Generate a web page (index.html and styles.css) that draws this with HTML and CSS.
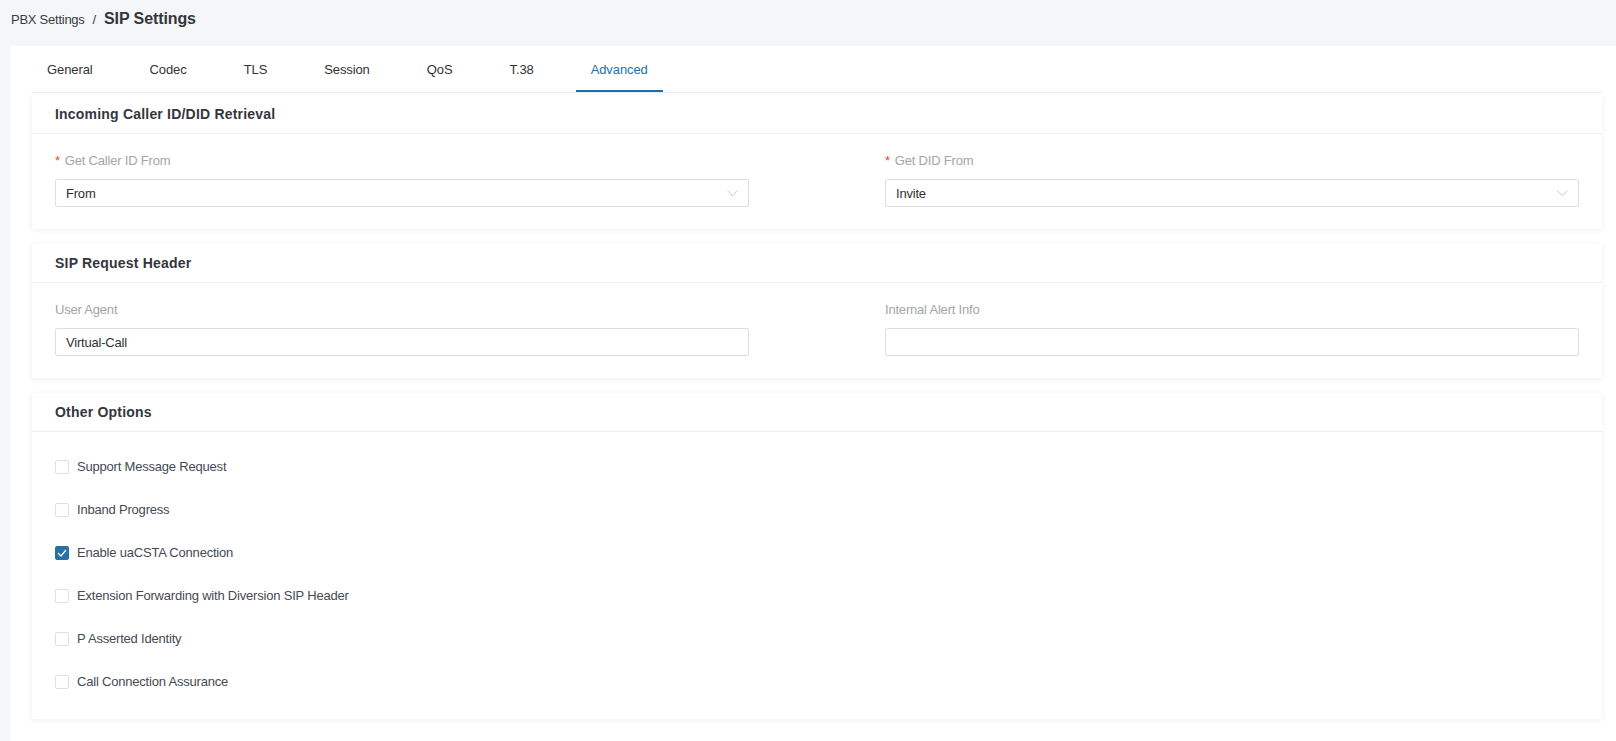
FILE: index.html
```html
<!DOCTYPE html>
<html lang="en">
<head>
<meta charset="utf-8">
<title>SIP Settings</title>
<link rel="stylesheet" href="styles.css">
</head>
<body>
<div class="breadcrumb">
  <span class="crumb">PBX Settings</span>
  <span class="sep">/</span>
  <span class="current">SIP Settings</span>
</div>
<div class="panel">
  <div class="tabs">
    <div class="tab">General</div>
    <div class="tab">Codec</div>
    <div class="tab">TLS</div>
    <div class="tab">Session</div>
    <div class="tab">QoS</div>
    <div class="tab">T.38</div>
    <div class="tab active">Advanced</div>
  </div>

  <div class="card first">
    <div class="card-head">Incoming Caller ID/DID Retrieval</div>
    <div class="card-body grid">
      <div class="field">
        <div class="label"><span class="req">*</span>Get Caller ID From</div>
        <div class="select">
          <span>From</span>
          <svg class="chev" width="11" height="7" viewBox="0 0 11 7"><polyline points="0.5,0.5 5.5,6 10.5,0.5" fill="none" stroke="#c9cbcf" stroke-width="1"/></svg>
        </div>
      </div>
      <div class="field">
        <div class="label"><span class="req">*</span>Get DID From</div>
        <div class="select">
          <span>Invite</span>
          <svg class="chev" width="11" height="7" viewBox="0 0 11 7"><polyline points="0.5,0.5 5.5,6 10.5,0.5" fill="none" stroke="#c9cbcf" stroke-width="1"/></svg>
        </div>
      </div>
    </div>
  </div>

  <div class="card">
    <div class="card-head">SIP Request Header</div>
    <div class="card-body grid">
      <div class="field">
        <div class="label">User Agent</div>
        <div class="input">Virtual-Call</div>
      </div>
      <div class="field">
        <div class="label">Internal Alert Info</div>
        <div class="input"></div>
      </div>
    </div>
  </div>

  <div class="card">
    <div class="card-head">Other Options</div>
    <div class="card-body list">
      <div class="check-row"><span class="box"></span><span>Support Message Request</span></div>
      <div class="check-row"><span class="box"></span><span>Inband Progress</span></div>
      <div class="check-row"><span class="box checked"><svg width="10" height="8" viewBox="0 0 10 8"><polyline points="1,4 4,7 9,1" fill="none" stroke="#fff" stroke-width="1.3"/></svg></span><span>Enable uaCSTA Connection</span></div>
      <div class="check-row"><span class="box"></span><span>Extension Forwarding with Diversion SIP Header</span></div>
      <div class="check-row"><span class="box"></span><span>P Asserted Identity</span></div>
      <div class="check-row"><span class="box"></span><span>Call Connection Assurance</span></div>
    </div>
  </div>
</div>
</body>
</html>
```

FILE: styles.css
```css
html, body {
  margin: 0;
  padding: 0;
}
body {
  background: #f5f6f8;
  font-family: "Liberation Sans", Arial, sans-serif;
  font-size: 13px;
  letter-spacing: -0.2px;
  color: #333;
}
.breadcrumb {
  height: 46px;
  box-sizing: border-box;
  padding: 9px 0 0 11px;
  display: flex;
  align-items: baseline;
  line-height: 20px;
}
.crumb {
  color: #3a3d44;
  font-size: 13px;
  letter-spacing: -0.25px;
}
.sep {
  color: #3a3d44;
  margin: 0 8px 0 8px;
  font-size: 13px;
}
.current {
  font-size: 16px;
  font-weight: bold;
  letter-spacing: -0.1px;
  color: #33363d;
}
.panel {
  margin-left: 10px;
  background: #fff;
  padding: 0 14px 22px 22px;
  min-height: calc(100vh - 46px);
  box-sizing: border-box;
}
.tabs {
  display: flex;
  border-bottom: 1px solid #ebedf0;
}
.tab {
  padding: 3px 15px 0;
  margin-right: 27px;
  line-height: 41px;
  letter-spacing: -0.1px;
  border-bottom: 2px solid transparent;
  color: #333;
}
.tab.active {
  color: #1f6fa8;
  border-bottom-color: #1f6fa8;
}
.card {
  background: #fff;
  box-shadow: 0 1px 6px rgba(0, 0, 0, 0.07);
  margin-top: 15px;
}
.card.first {
  margin-top: 2px;
}
.card-head {
  height: 38px;
  line-height: 39px;
  padding: 0 23px;
  font-size: 14px;
  font-weight: bold;
  letter-spacing: 0.2px;
  color: #33363d;
  border-bottom: 1px solid #eceef1;
}
.card-body.grid {
  display: grid;
  grid-template-columns: 1fr 1fr;
  column-gap: 136px;
  padding: 18px 23px 22px;
}
.label {
  line-height: 18px;
  color: #a2a5aa;
  margin-bottom: 9px;
}
.req {
  color: #ef3f2f;
  margin-right: 5px;
}
.select, .input {
  height: 28px;
  box-sizing: border-box;
  border: 1px solid #dcdee2;
  border-radius: 2px;
  padding: 0 10px;
  display: flex;
  align-items: center;
  justify-content: space-between;
  color: #303133;
}
.chev {
  display: block;
}
.card-body.list {
  padding: 13px 23px 16px;
}
.check-row {
  height: 43px;
  display: flex;
  align-items: center;
  color: #454a54;
}
.box {
  width: 14px;
  height: 14px;
  box-sizing: border-box;
  border: 1px solid #dcdfe4;
  border-radius: 2px;
  margin-right: 8px;
  display: flex;
  align-items: center;
  justify-content: center;
}
.box.checked {
  background: #2870a5;
  border-color: #2870a5;
}
```
